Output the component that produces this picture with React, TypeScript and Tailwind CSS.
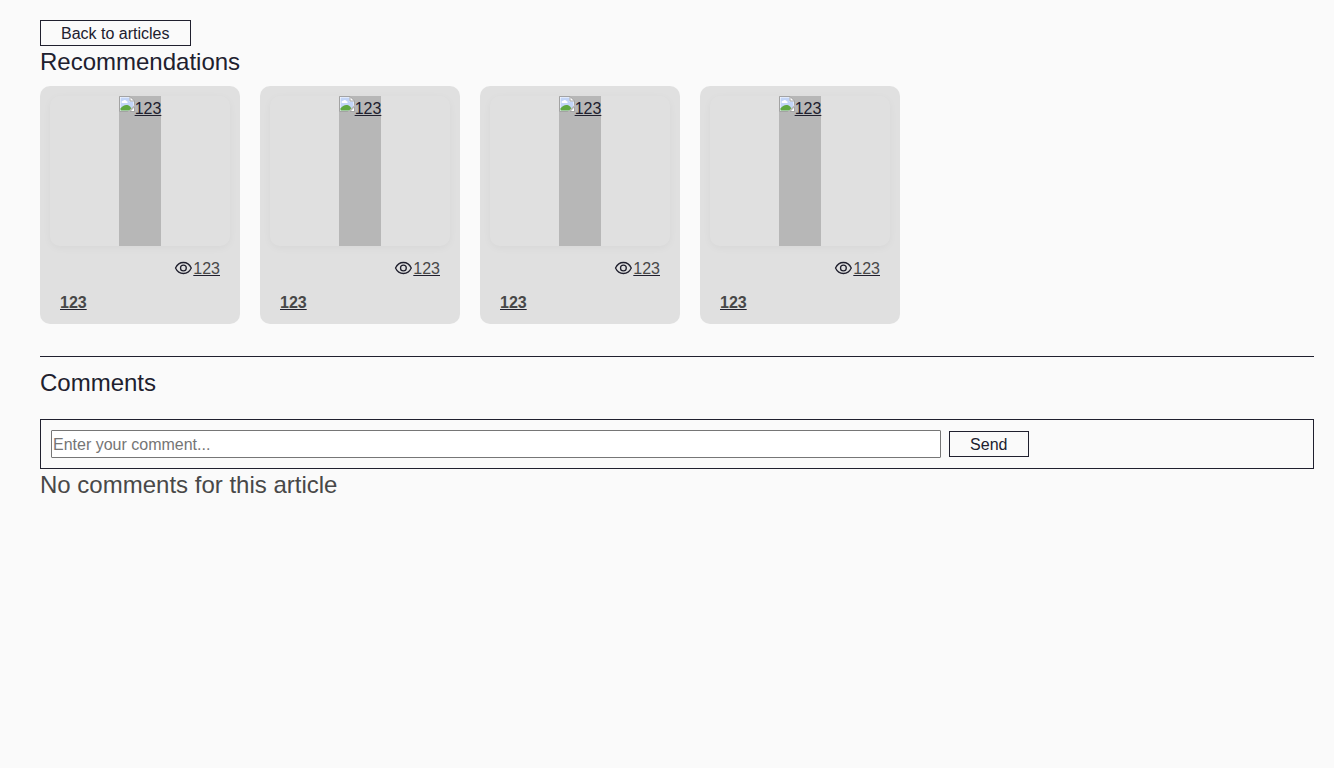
import React from 'react';

function BrokenImageIcon() {
  return (
    <svg width="16" height="16" viewBox="0 0 16 16" className="block shrink-0">
      <path d="M0.5 0.5H11L15.5 5V15.5H0.5Z" fill="#ffffff" stroke="#a3a3a3" />
      <path d="M1.5 1.5H10.5V5.5H14.5V14.5H1.5Z" fill="#c3d5f7" />
      <path d="M3 7a1.6 1.3 0 0 1 1.2-2.2a1.9 1.9 0 0 1 3.4 .5a1.1 1.1 0 0 1 .8 1.7Z" fill="#ffffff" />
      <path d="M1.5 14.5V12.5C4 9 8 8 11 10.5L14 14.5Z" fill="#5fa83f" />
      <path d="M11 0.5V5H15.5Z" fill="#ffffff" stroke="#a3a3a3" />
      <path d="M8.5 16L16 8.5V11L11 16Z" fill="#b7b7b7" />
      <path d="M11 15.5H15.5V11.5" fill="none" stroke="#a3a3a3" />
      <path d="M12 15L15 12V15Z" fill="#ffffff" />
    </svg>
  );
}

function EyeIcon() {
  return (
    <svg width="18" height="14" viewBox="0 0 18 14" fill="none" stroke="#20202e" strokeWidth="1.3" className="block shrink-0">
      <path d="M1.5 7C3.2 3.4 5.8 1.5 9.4 1.5S15.6 3.4 17.3 7C15.6 10.6 13 12.5 9.4 12.5S3.2 10.6 1.5 7Z" strokeLinejoin="round" />
      <circle cx="9.4" cy="7" r="2.9" />
    </svg>
  );
}

function ArticleCard() {
  return (
    <a href="#" className="block h-[238px] w-[200px] rounded-[10px] bg-[#e0e0e0] p-[10px] text-[#20202e] underline-offset-1">
      <div className="flex h-[150px] justify-center rounded-[10px] shadow-[0_2px_8px_rgba(0,0,0,0.04)]">
        <div className="flex h-full bg-[#b7b7b7]">
          <BrokenImageIcon />
          <span className="pt-px underline">123</span>
        </div>
      </div>
      <div className="mt-[10px] flex h-6 items-center justify-end pr-[10px]">
        <EyeIcon />
        <span className="pt-0.5 pl-px text-[#484848] underline decoration-[#20202e]">123</span>
      </div>
      <div className="mt-[11px] pl-[10px] font-bold text-[#484848] underline decoration-[#20202e]">123</div>
    </a>
  );
}

const cards = [1, 2, 3, 4];

export default function App() {
  return (
    <main className="min-h-screen bg-[#fafafa] pt-5 pr-5 pl-10 font-['Liberation_Sans',Arial,sans-serif] text-base leading-6 text-[#20202e]">
      <button className="block h-[26px] w-[150.5px] border border-[#20202e] pt-px text-center leading-6">Back to articles</button>
      <h2 className="h-8 text-2xl leading-8">Recommendations</h2>
      <div className="mt-2 flex gap-5">
        {cards.map((id) => (
          <ArticleCard key={id} />
        ))}
      </div>
      <section className="mt-8 border-t border-[#20202e] pt-[10px]">
        <h2 className="text-2xl leading-8">Comments</h2>
        <div className="mt-5 flex h-[50px] items-center border border-[#20202e] px-[10px]">
          <input
            placeholder="Enter your comment..."
            className="h-7 w-[890px] rounded-[1px] border border-[#767676] bg-white px-px pt-0.5 placeholder:text-[#757575]"
          />
          <button className="ml-2 h-[26px] w-[79.5px] border border-[#20202e] pt-px text-center leading-6">Send</button>
        </div>
        <p className="text-2xl leading-8 text-[#484848]">No comments for this article</p>
      </section>
    </main>
  );
}
